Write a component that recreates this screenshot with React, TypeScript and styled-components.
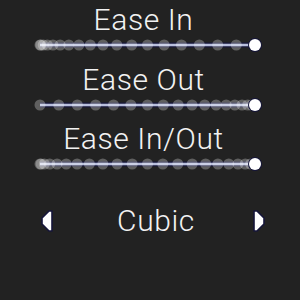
import styled, { createGlobalStyle } from "styled-components";

type Ease = (t: number) => number;

const easeIn: Ease = (t) => 1 - Math.cos((t * Math.PI) / 2);
const easeOut: Ease = (t) => Math.sin((t * Math.PI) / 2);
const easeInOut: Ease = (t) => -(Math.cos(Math.PI * t) - 1) / 2;

const curves: { name: string; fn: Ease; steps: number }[] = [
  { name: "Ease In", fn: easeIn, steps: 18 },
  { name: "Ease Out", fn: easeOut, steps: 18 },
  { name: "Ease In/Out", fn: easeInOut, steps: 22 },
];

const X0 = 8;
const X1 = 223;

const GlobalStyle = createGlobalStyle`
  html, body {
    margin: 0;
    padding: 0;
    background: #222222;
  }
  body {
    font-family: Roboto, "Liberation Sans", sans-serif;
  }
`;

const Track: React.FC<{ fn: Ease; steps: number }> = ({ fn, steps }) => {
  const dots = Array.from({ length: steps }, (_, i) => X0 + (X1 - X0) * fn(i / steps));
  return (
    <TrackSvg viewBox="0 0 236 16" width={236} height={16}>
      <line x1={X0} y1={8} x2={X1} y2={8} stroke="#16163a" strokeWidth={5} />
      <line x1={X0} y1={8} x2={X1} y2={8} stroke="#b8bedc" strokeWidth={2.5} />
      {dots.map((x, i) => (
        <circle key={i} cx={x} cy={8} r={5.5} fill="rgba(255,255,255,0.28)" />
      ))}
      <circle cx={X1} cy={8} r={7} fill="#16163a" />
      <circle cx={X1} cy={8} r={6} fill="#ffffff" />
    </TrackSvg>
  );
};

const Arrow: React.FC<{ dir: "left" | "right" }> = ({ dir }) => (
  <ArrowSvg viewBox="0 0 16 24" width={16} height={24}>
    <path
      d={
        dir === "left"
          ? "M13 2 L13 22 L10 22 L3 15 L3 9 L10 2 Z"
          : "M3 2 L3 22 L6 22 L13 15 L13 9 L6 2 Z"
      }
      fill="#ffffff"
      stroke="#16163a"
      strokeWidth={1.6}
      strokeLinejoin="round"
    />
  </ArrowSvg>
);

const App: React.FC = () => {
  return (
    <>
      <GlobalStyle />
      <Screen>
        {curves.map((c) => (
          <Row key={c.name}>
            <Label>{c.name}</Label>
            <Track fn={c.fn} steps={c.steps} />
          </Row>
        ))}
        <Selector>
          <Arrow dir="left" />
          <Value>Cubic</Value>
          <Arrow dir="right" />
        </Selector>
      </Screen>
    </>
  );
};

export default App;

const Screen = styled.div`
  width: 300px;
  height: 300px;
  background: #222222;
  display: flex;
  flex-direction: column;
  align-items: center;
  padding-top: 3px;
  box-sizing: border-box;
  gap: 9.5px;
`;

const Row = styled.div`
  display: flex;
  flex-direction: column;
  align-items: center;
`;

const Label = styled.div`
  color: #f2f2f2;
  font-size: 30px;
  font-weight: 300;
  line-height: 34px;
  letter-spacing: 0.6px;
  margin-right: 13px;
`;

const TrackSvg = styled.svg`
  display: block;
`;

const Selector = styled.div`
  width: 228px;
  margin-top: 22px;
  display: flex;
  align-items: center;
  justify-content: space-between;
  padding-left: 6px;
`;

const Value = styled.div`
  color: #f2f2f2;
  font-size: 30px;
  font-weight: 300;
  line-height: 34px;
  letter-spacing: 0.6px;
  margin-left: 6px;
`;

const ArrowSvg = styled.svg`
  display: block;
`;
